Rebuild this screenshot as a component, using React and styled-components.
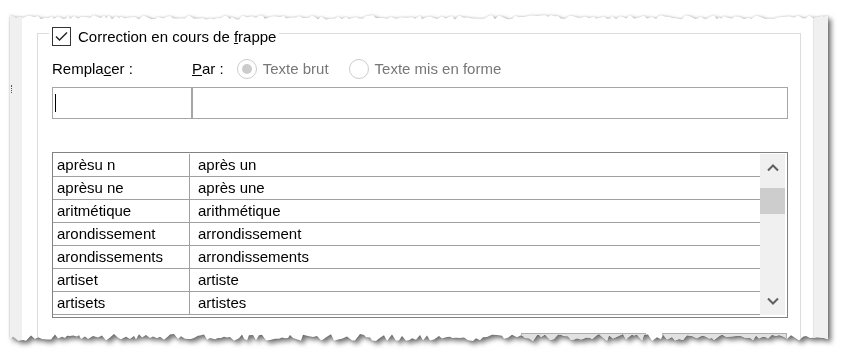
import React from "react";
import styled, { createGlobalStyle } from "styled-components";

// Styles
const GlobalStyle = createGlobalStyle`
  html, body {
    margin: 0;
    background: #ffffff;
  }
  body {
    font-family: "Liberation Sans", Arial, sans-serif;
    font-size: 15px;
    color: #000000;
  }
`;

const Frame = styled.div`
  padding: 15px 0 0 10px;
  width: 841px;
  height: 358px;
  box-sizing: border-box;
  overflow: hidden;
`;

const ShadowWrap = styled.div`
  width: 818px;
  filter: drop-shadow(0 0 1px rgba(0, 0, 0, 0.22))
    drop-shadow(3px 3px 2.5px rgba(0, 0, 0, 0.55));
`;

const Card = styled.div.attrs((props) => ({
  style: { clipPath: props.$clip },
}))`
  display: flex;
  height: 327px;
  background: #ffffff;
  overflow: hidden;
`;

const SideStrip = styled.div`
  flex: 0 0 ${({ $width }) => $width}px;
  background: #f0f0f0;
  display: flex;
  flex-direction: column;
  box-sizing: border-box;
  border-left: ${({ $edge }) => ($edge ? "1px solid #e4e4e4" : "none")};
`;

const Grip = styled.div`
  width: 0;
  height: 8px;
  margin: 70px 0 0 1px;
  border-left: 1px dotted #555555;
`;

const Main = styled.div`
  flex: 1;
  display: flex;
  flex-direction: column;
  padding: 18px 12px 0 15px;
  min-width: 0;
`;

const Group = styled.div`
  flex: 1;
  border: 1px solid #dcdcdc;
  border-bottom: none;
  padding: 0 12px 0 14px;
  display: flex;
  flex-direction: column;
`;

const Title = styled.div`
  display: flex;
  align-items: center;
  gap: 7px;
  align-self: flex-start;
  margin: -7px 0 0 -3px;
  padding: 0 3px;
  height: 19px;
  background: #ffffff;
  line-height: 19px;
`;

const CheckBox = styled.span`
  flex: 0 0 19px;
  width: 19px;
  height: 19px;
  box-sizing: border-box;
  border: 1px solid #333333;
  display: flex;
  align-items: center;
  justify-content: center;
`;

const LabelRow = styled.div`
  display: grid;
  grid-template-columns: 140px 1fr;
  margin-top: 13px;
  line-height: 20px;
  height: 20px;
`;

const Options = styled.div`
  display: flex;
  align-items: center;
`;

const Radio = styled.span`
  width: 20px;
  height: 20px;
  box-sizing: border-box;
  border-radius: 50%;
  border: 1px solid #cccccc;
  background: #ffffff;
  margin-left: ${({ $gap }) => $gap}px;
  margin-right: 6px;
  display: flex;
  align-items: center;
  justify-content: center;

  &::after {
    content: "";
    width: 10px;
    height: 10px;
    border-radius: 50%;
    background: ${({ $checked }) => ($checked ? "#cccccc" : "transparent")};
  }
`;

const Muted = styled.span`
  color: #777777;
`;

const InputRow = styled.div`
  display: flex;
  margin-top: 8px;
`;

const Field = styled.div`
  box-sizing: border-box;
  height: 32px;
  border: 1px solid #a6a6a6;
  display: flex;
  align-items: center;
  padding-left: 2px;
  ${({ $grow }) => ($grow ? "flex: 1;" : "flex: 0 0 140px;")}
`;

const Caret = styled.span`
  width: 1px;
  height: 18px;
  background: #000000;
`;

const Table = styled.div`
  display: flex;
  margin-top: 33px;
  border: 1px solid #828282;
  padding: 1px 2px 2px 0;
`;

const List = styled.div`
  flex: 1;
`;

const Row = styled.div`
  display: grid;
  grid-template-columns: 137px 1fr;
  height: 23px;
  box-sizing: border-box;
  border-bottom: 1px solid #a0a0a0;
  line-height: 22px;
`;

const Cell = styled.div`
  padding-left: ${({ $pad }) => $pad}px;
  border-right: ${({ $divider }) => ($divider ? "1px solid #a0a0a0" : "none")};
  white-space: nowrap;
  overflow: hidden;
`;

const ScrollBar = styled.div`
  flex: 0 0 25px;
  background: #f0f0f0;
  display: flex;
  flex-direction: column;
`;

const Arrow = styled.div`
  height: 28px;
  display: flex;
  align-items: center;
  justify-content: center;
`;

const Thumb = styled.div`
  height: 26px;
  margin-top: 6px;
  background: #cdcdcd;
`;

const Spacer = styled.div`
  flex: 1;
`;

const ButtonRow = styled.div`
  display: flex;
  justify-content: flex-end;
  gap: 16px;
  margin: 15px 1px 0 0;
`;

const Button = styled.div`
  width: 125px;
  height: 30px;
  box-sizing: border-box;
  background: #e1e1e1;
  border: 1px solid #adadad;
`;

// Torn paper edge
function makeRandom(seed) {
  let s = seed;
  return () => {
    s = (s * 16807) % 2147483647;
    return (s - 1) / 2147483646;
  };
}

function tornClip(width, height) {
  const rand = makeRandom(4217);
  const pts = [];
  for (let x = 0; x < width; x += 2 + Math.round(rand() * 3)) {
    pts.push(`${x}px ${(rand() * 4.5).toFixed(1)}px`);
  }
  pts.push(`${width}px ${(rand() * 3).toFixed(1)}px`);
  for (let x = width; x > 0; x -= 2 + Math.round(rand() * 3)) {
    pts.push(`${x}px ${(height - 1 - rand() * 7).toFixed(1)}px`);
  }
  pts.push(`0px ${height - 3}px`);
  return `polygon(${pts.join(", ")})`;
}

const CLIP = tornClip(818, 327);

const entries = [
  ["aprèsu n", "après un"],
  ["aprèsu ne", "après une"],
  ["aritmétique", "arithmétique"],
  ["arondissement", "arrondissement"],
  ["arondissements", "arrondissements"],
  ["artiset", "artiste"],
  ["artisets", "artistes"],
];

function Chevron({ down }) {
  return (
    <svg width="12" height="8" viewBox="0 0 12 8">
      <path
        d={down ? "M1 1.5 L6 6.5 L11 1.5" : "M1 6.5 L6 1.5 L11 6.5"}
        fill="none"
        stroke="#606060"
        strokeWidth="2"
      />
    </svg>
  );
}

export default function App() {
  return (
    <>
      <GlobalStyle />
      <Frame>
        <ShadowWrap>
          <Card $clip={CLIP}>
            <SideStrip $width={12}>
              <Grip />
            </SideStrip>
            <Main>
              <Group>
                <Title>
                  <CheckBox>
                    <svg width="15" height="15" viewBox="0 0 15 15">
                      <path
                        d="M2 7.5 L5.5 11 L13 3.5"
                        fill="none"
                        stroke="#222222"
                        strokeWidth="1.4"
                      />
                    </svg>
                  </CheckBox>
                  <span>
                    Correction en cours de <u>f</u>rappe
                  </span>
                </Title>
                <LabelRow>
                  <span>
                    Rempla<u>c</u>er :
                  </span>
                  <Options>
                    <span>
                      <u>P</u>ar :
                    </span>
                    <Radio $gap={13} $checked />
                    <Muted>Texte brut</Muted>
                    <Radio $gap={20} />
                    <Muted>Texte mis en forme</Muted>
                  </Options>
                </LabelRow>
                <InputRow>
                  <Field>
                    <Caret />
                  </Field>
                  <Field $grow />
                </InputRow>
                <Table>
                  <List>
                    {entries.map(([from, to]) => (
                      <Row key={from}>
                        <Cell $pad={4} $divider>
                          {from}
                        </Cell>
                        <Cell $pad={8}>{to}</Cell>
                      </Row>
                    ))}
                  </List>
                  <ScrollBar>
                    <Arrow>
                      <Chevron />
                    </Arrow>
                    <Thumb />
                    <Spacer />
                    <Arrow>
                      <Chevron down />
                    </Arrow>
                  </ScrollBar>
                </Table>
                <ButtonRow>
                  <Button />
                  <Button />
                </ButtonRow>
              </Group>
            </Main>
            <SideStrip $width={15} $edge />
          </Card>
        </ShadowWrap>
      </Frame>
    </>
  );
}
